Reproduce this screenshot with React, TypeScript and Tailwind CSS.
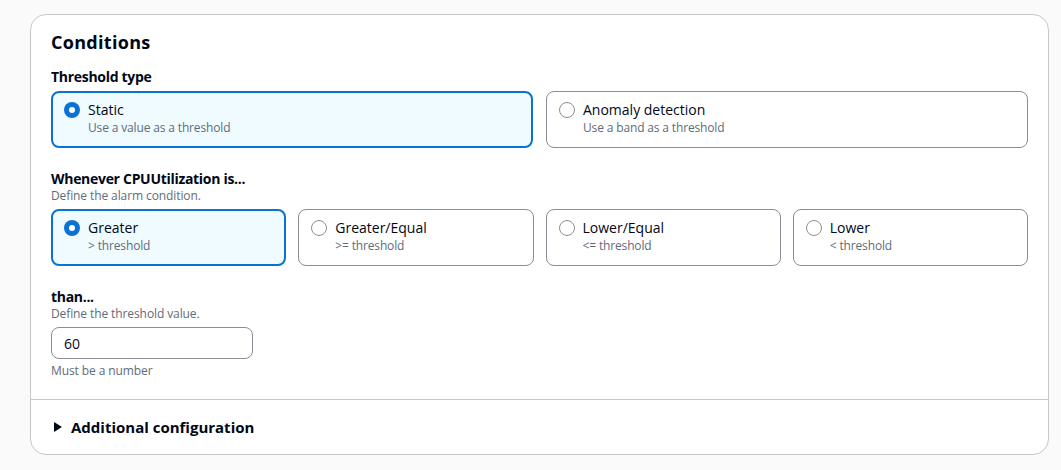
const font = { fontFamily: '"Open Sans", "Noto Sans", Arial, sans-serif' }

type Option = { label: string; description: string }

const thresholdTypes: Option[] = [
  { label: 'Static', description: 'Use a value as a threshold' },
  { label: 'Anomaly detection', description: 'Use a band as a threshold' },
]

const comparisons: Option[] = [
  { label: 'Greater', description: '> threshold' },
  { label: 'Greater/Equal', description: '>= threshold' },
  { label: 'Lower/Equal', description: '<= threshold' },
  { label: 'Lower', description: '< threshold' },
]

function Radio({ checked }: { checked: boolean }) {
  return checked ? (
    <span className="flex h-4 w-4 shrink-0 items-center justify-center rounded-full bg-[#0972d3]">
      <span className="h-[6px] w-[6px] rounded-full bg-white" />
    </span>
  ) : (
    <span className="h-4 w-4 shrink-0 rounded-full border border-[#8c8c94] bg-white" />
  )
}

function Tile({ option, checked }: { option: Option; checked: boolean }) {
  return (
    <div
      className={`flex flex-col rounded-lg ${
        checked
          ? 'border-2 border-[#0972d3] bg-[#f0fbff] px-[11px] pt-[7px] pb-[10px]'
          : 'border border-[#8c8c94] bg-white px-3 pt-2 pb-[11px]'
      }`}
    >
      <div className="flex items-center gap-2">
        <Radio checked={checked} />
        <span className="text-[14px] leading-5 text-[#000716]">{option.label}</span>
      </div>
      <div className="pl-6 text-[12px] leading-4 tracking-[-0.15px] text-[#5f6b7a]">{option.description}</div>
    </div>
  )
}

export default function App() {
  return (
    <div className="min-h-[470px] bg-[#fafafa] pt-[14px] pl-[30px]" style={font}>
      <div className="w-[1019px] rounded-2xl border border-[#c6c6cd] bg-white">
        <div className="flex flex-col px-5 pt-4 pb-5">
          <h2 className="text-[18px] leading-[22px] font-bold tracking-[0.3px] text-[#000716]">Conditions</h2>

          <div className="mt-[15px] text-[14px] leading-[18px] font-bold tracking-[-0.3px] text-[#000716]">
            Threshold type
          </div>
          <div className="mt-[5px] grid grid-cols-2 gap-x-[13px]">
            {thresholdTypes.map((t, i) => (
              <Tile key={t.label} option={t} checked={i === 0} />
            ))}
          </div>

          <div className="mt-[22px] text-[14px] leading-[18px] font-bold tracking-[-0.3px] text-[#000716]">
            Whenever CPUUtilization is...
          </div>
          <div className="text-[12px] leading-4 tracking-[-0.1px] text-[#5f6b7a]">Define the alarm condition.</div>
          <div className="mt-[5px] grid grid-cols-4 gap-x-3">
            {comparisons.map((c, i) => (
              <Tile key={c.label} option={c} checked={i === 0} />
            ))}
          </div>

          <div className="mt-[22px] text-[14px] leading-[18px] font-bold tracking-[-0.3px] text-[#000716]">than...</div>
          <div className="text-[12px] leading-4 tracking-[-0.1px] text-[#5f6b7a]">Define the threshold value.</div>
          <input
            className="mt-[5px] h-8 w-[202px] rounded-lg border border-[#8c8c94] px-3 text-[14px] text-[#000716] outline-none"
            defaultValue="60"
            style={font}
          />
          <div className="mt-1 text-[12px] leading-4 tracking-[-0.1px] text-[#5f6b7a]">Must be a number</div>
        </div>

        <div className="flex items-center gap-[9px] border-t border-[#c6c6cd] pt-[17px] pr-6 pb-[17px] pl-[23px]">
          <svg width="8" height="10" viewBox="0 0 8 10" className="shrink-0">
            <path d="M0 0 L8 5 L0 10 Z" fill="#000716" />
          </svg>
          <span className="text-[15px] leading-5 font-bold text-[#000716]">Additional configuration</span>
        </div>
      </div>
    </div>
  )
}
